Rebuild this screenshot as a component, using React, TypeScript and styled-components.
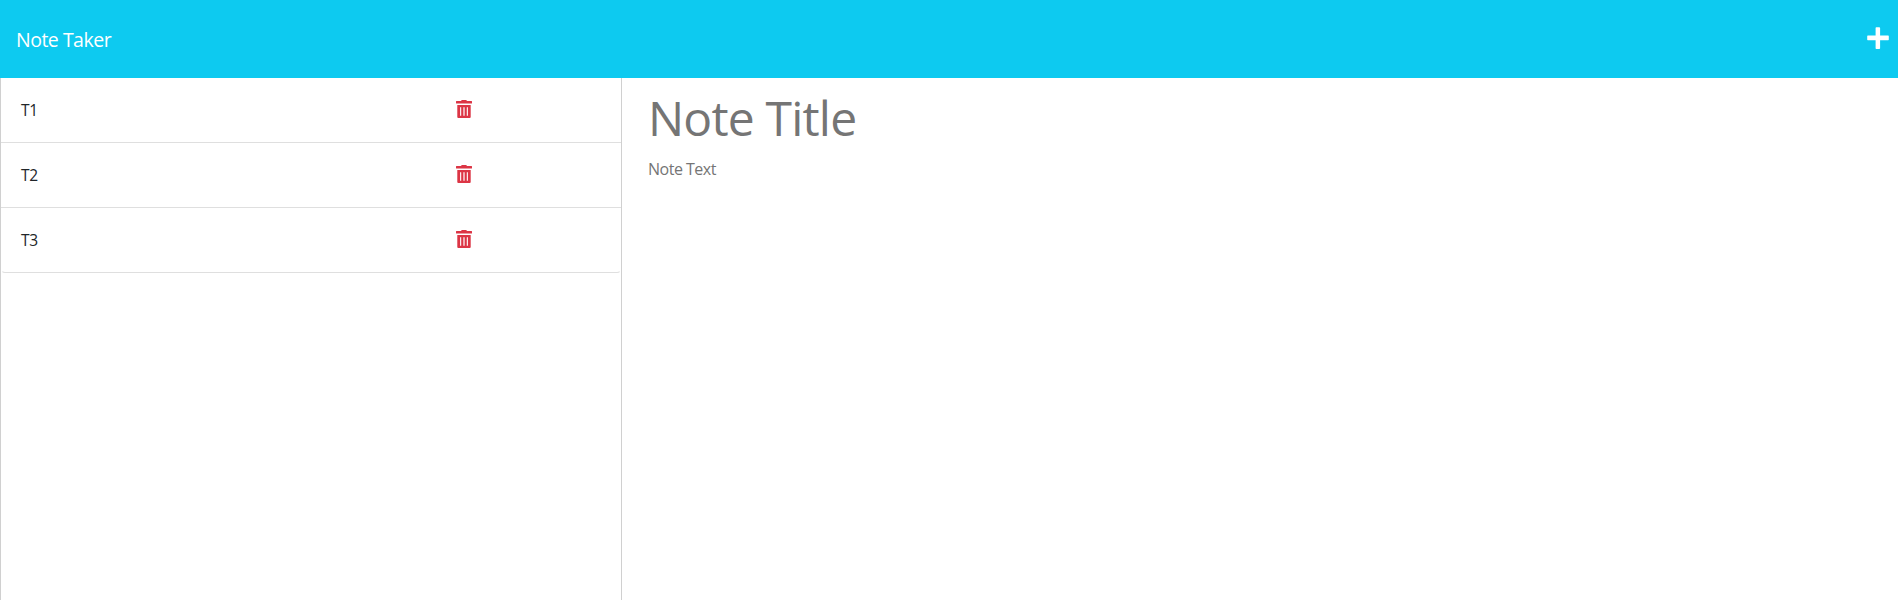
import React from "react";
import styled, { createGlobalStyle } from "styled-components";

const GlobalStyle = createGlobalStyle`
  *, *::before, *::after { box-sizing: border-box; }
  body {
    margin: 0;
    background: #fff;
    color: #212529;
    font-family: "Segoe UI", "Open Sans", "Noto Sans", sans-serif;
    font-size: 16px;
    line-height: 24px;
  }
`;

const Page = styled.div`
  display: flex;
  flex-direction: column;
  height: 100vh;
  overflow: hidden;
`;

const Navbar = styled.header`
  display: flex;
  align-items: center;
  justify-content: space-between;
  flex: none;
  height: 78px;
  padding: 0 9px 0 16px;
  background: #0dcaf0;
  color: #fff;
`;

const Brand = styled.span`
  font-size: 19.5px;
  line-height: 30px;
  letter-spacing: -0.5px;
  padding-top: 2px;
`;

const IconButton = styled.button`
  display: flex;
  padding: 0;
  border: 0;
  background: none;
  color: inherit;
  cursor: pointer;
`;

const AddButton = styled(IconButton)`
  margin-bottom: 2px;
`;

const DeleteButton = styled(IconButton)`
  width: 165px;
  color: #dc3545;
  margin-bottom: 2px;
`;

const Main = styled.main`
  display: flex;
  flex: 1;
`;

const Sidebar = styled.aside`
  flex: none;
  width: 622px;
  border: solid #d0d0d0;
  border-width: 0 1px;
`;

const NoteList = styled.ul`
  margin: 0;
  padding: 0;
  list-style: none;
`;

const NoteItem = styled.li`
  display: flex;
  align-items: center;
  justify-content: space-between;
  height: 65px;
  padding-left: 20px;
  border-bottom: 1px solid #dfdfdf;

  &:last-child {
    border-right: 1px solid transparent;
    border-left: 1px solid transparent;
    padding-left: 19px;
    border-radius: 0 0 4px 4px;
  }
  &:last-child ${DeleteButton} {
    width: 164px;
  }
`;

const NoteName = styled.span`
  font-size: 15.5px;
  letter-spacing: -0.2px;
`;

const Editor = styled.section`
  flex: 1;
  padding: 4px 26px;
  color: #757575;
`;

const Title = styled.h1`
  margin: 0;
  font-size: 48px;
  font-weight: 400;
  line-height: 72px;
  letter-spacing: -0.8px;
`;

const Body = styled.p`
  margin: 3px 0 0;
  font-size: 16px;
  letter-spacing: -0.5px;
`;

const PlusIcon = () => (
  <svg width="22" height="22" viewBox="0 0 22 22" fill="currentColor">
    <path d="M9.300 0.200h2.900q.9 0 .9.7v7.700h8.100q.6 0 .6.7v3.200q0 .7-.6.7h-8.100v8.100q0 .6-.9.6H9.300q-.7 0-.7-.6v-8.100H.8q-.6 0-.6-.7V9.300q0-.7.6-.7h7.800V.9q0-.7.7-.7z" />
  </svg>
);

const TrashIcon = () => (
  <svg width="16" height="18" viewBox="0 0 16 18" fill="currentColor">
    <path d="M5 1 5.500.3Q5.700 0 6.100 0h3.800q.4 0 .6.3l.5.700h4.500q.5 0 .5.5v1.500q0 .5-.5.5H.5Q0 3.500 0 3V1.500Q0 1 .5 1z" />
    <path
      fillRule="evenodd"
      d="M1.300 5h13.400v12q0 1-1 1h-11.400q-1 0-1-1zM4.100 7.200v8.600h1.100V7.200zM7.400 7.200v8.600h1.200V7.200zM10.800 7.200v8.600h1.100V7.200z"
    />
  </svg>
);

const notes = ["T1", "T2", "T3"];

export default function App() {
  return (
    <>
      <GlobalStyle />
      <Page>
        <Navbar>
          <Brand>Note Taker</Brand>
          <AddButton aria-label="Add note">
            <PlusIcon />
          </AddButton>
        </Navbar>
        <Main>
          <Sidebar>
            <NoteList>
              {notes.map((name) => (
                <NoteItem key={name}>
                  <NoteName>{name}</NoteName>
                  <DeleteButton aria-label={`Delete ${name}`}>
                    <TrashIcon />
                  </DeleteButton>
                </NoteItem>
              ))}
            </NoteList>
          </Sidebar>
          <Editor>
            <Title>Note Title</Title>
            <Body>Note Text</Body>
          </Editor>
        </Main>
      </Page>
    </>
  );
}
